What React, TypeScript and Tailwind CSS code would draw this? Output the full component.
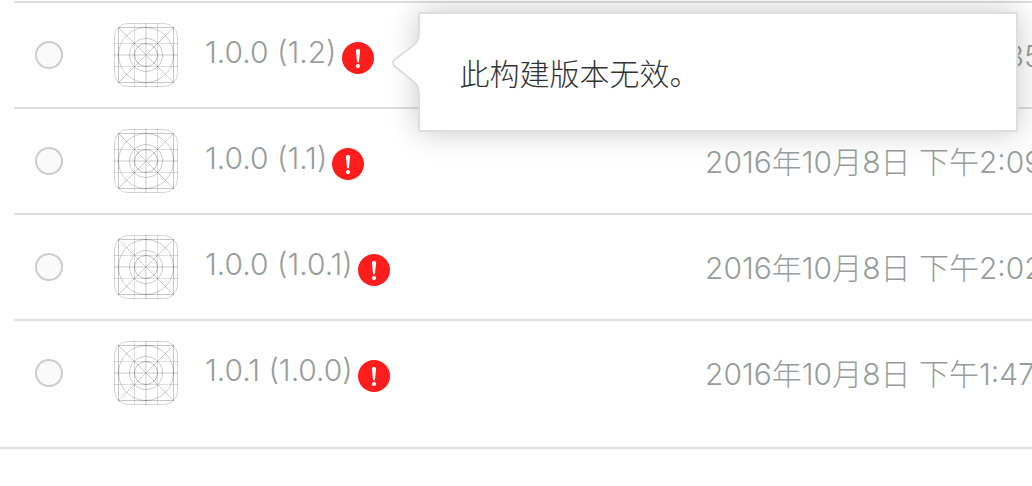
import React from "react";

type Build = { id: string; version: string; uploaded: string };

const builds: Build[] = [
  { id: "b1", version: "1.0.0 (1.2)", uploaded: "2016年10月8日 下午2:35" },
  { id: "b2", version: "1.0.0 (1.1)", uploaded: "2016年10月8日 下午2:09" },
  { id: "b3", version: "1.0.0 (1.0.1)", uploaded: "2016年10月8日 下午2:02" },
  { id: "b4", version: "1.0.1 (1.0.0)", uploaded: "2016年10月8日 下午1:47" },
];

function AppIcon() {
  return (
    <svg viewBox="0 0 64 64" className="block size-16" fill="none" stroke="#000" aria-hidden="true">
      <rect x="0.5" y="0.5" width="63" height="63" rx="13.5" strokeOpacity="0.17" />
      <path d="M20.5 0V64M43.5 0V64M0 20.5H64M0 43.5H64" strokeOpacity="0.13" />
      <path d="M32 0V64M0 32H64" strokeWidth="2" strokeOpacity="0.1" />
      <rect x="4.5" y="4.5" width="55" height="55" strokeOpacity="0.22" />
      <path d="M4.5 4.5L59.5 59.5M59.5 4.5L4.5 59.5" strokeWidth="0.8" strokeOpacity="0.26" />
      <circle cx="32" cy="32" r="27.5" strokeOpacity="0.2" />
      <circle cx="32" cy="32" r="16.5" strokeOpacity="0.2" />
      <circle cx="32" cy="32" r="11.5" strokeOpacity="0.25" />
    </svg>
  );
}

function AlertIcon() {
  return (
    <svg viewBox="0 0 32 32" className="block size-8" aria-hidden="true">
      <circle cx="16" cy="16" r="16" fill="#ff1c1c" />
      <path d="M13.9 8.6C13.9 6.3 18.1 6.3 18.1 8.6L17 19.4C16.8 20.9 15.2 20.9 15 19.4Z" fill="#fff" />
      <circle cx="16" cy="24.1" r="2.1" fill="#fff" />
    </svg>
  );
}

function Popover({ id, children }: { id: string; children: React.ReactNode }) {
  return (
    <div
      id={id}
      role="tooltip"
      className="absolute -top-[30px] left-19 z-10 h-[120px] w-[600px] rounded-xs border-2 border-[#dedede] bg-white px-10 pt-10 text-[#333] shadow-[0_0_30px_rgba(0,0,0,0.22)]"
    >
      <svg viewBox="0 0 28 68" className="absolute top-4 -left-7 h-[68px] w-7" aria-hidden="true">
        <path
          d="M28 1H27C27 9 26 11 22.500 14.500L3 29.500Q-1 33 3 36.500L22.500 52.500C26 56 27 59 27 67H28Z"
          fill="#fff"
        />
        <path
          d="M27 1C27 9 26 11 22.500 14.500L3 29.500Q-1 33 3 36.500L22.500 52.500C26 56 27 59 27 67"
          fill="none"
          stroke="#dedede"
          strokeWidth="2"
        />
      </svg>
      {children}
    </div>
  );
}

export default function App() {
  return (
    <main className="min-h-screen overflow-hidden bg-white pt-px font-['Inter','Noto_Sans_CJK_SC',sans-serif] text-[30px] leading-10 font-light text-[#979d9b]">
      <div className="border-b-2 border-[#dedede] pb-[22px] pl-3.5">
        <table className="w-full table-fixed border-separate border-spacing-0 whitespace-nowrap">
          <colgroup>
            <col className="w-[100px]" />
            <col className="w-[91px]" />
            <col className="w-[500px]" />
            <col />
          </colgroup>
          <tbody>
            {builds.map((build, index) => (
              <tr key={build.id} className="h-[106px] *:border-t-2 *:border-[#dedede] *:p-0">
                <td>
                  <input
                    type="radio"
                    name="build"
                    aria-label={build.version}
                    className="ml-[21px] block size-7 appearance-none rounded-full border-2 border-[#cdcdcd] bg-[#fafafa] checked:bg-[#cdcdcd]"
                  />
                </td>
                <td>
                  <AppIcon />
                </td>
                <td>
                  <div className="flex items-end gap-[5px] pb-1">
                    <span className="pb-0.5">{build.version}</span>
                    <span className="relative">
                      <button type="button" aria-label="无效" className="block rounded-full">
                        <AlertIcon />
                      </button>
                      {index === 0 && <Popover id="build-status">此构建版本无效。</Popover>}
                    </span>
                  </div>
                </td>
                <td>
                  <span className="block pt-0.5">{build.uploaded}</span>
                </td>
              </tr>
            ))}
          </tbody>
        </table>
      </div>
    </main>
  );
}
